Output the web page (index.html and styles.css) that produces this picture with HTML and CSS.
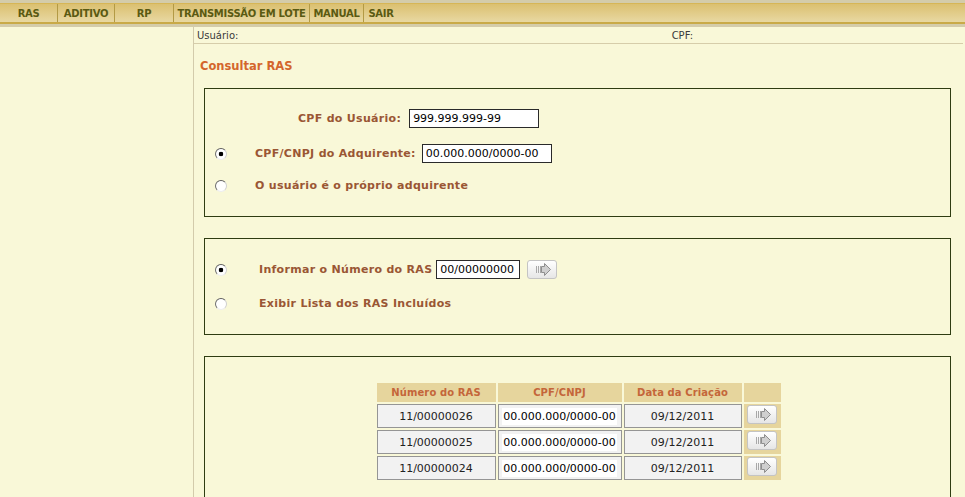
FILE: index.html
```html
<!DOCTYPE html>
<html lang="pt-BR">
<head>
<meta charset="utf-8">
<title>Consultar RAS</title>
<link rel="stylesheet" href="styles.css">
</head>
<body>
<div class="menubar">
  <div class="menu-inner">
    <a class="menu-item w-ras">RAS</a>
    <a class="menu-item w-aditivo">ADITIVO</a>
    <a class="menu-item w-rp">RP</a>
    <a class="menu-item w-trans">TRANSMISSÃO EM LOTE</a>
    <a class="menu-item w-manual">MANUAL</a>
    <a class="menu-item w-sair last">SAIR</a>
  </div>
</div>
<div class="main">
  <aside class="sidebar"></aside>
  <section class="content">
    <div class="userbar">
      <span class="user-label">Usuário:</span>
      <span class="cpf-label">CPF:</span>
    </div>
    <h1 class="title">Consultar RAS</h1>

    <div class="box box-one">
      <div class="row row-user">
        <label class="lbl">CPF do Usuário:</label>
        <input class="field field-wide gap8" type="text" value="999.999.999-99">
      </div>
      <div class="row row-radio1">
        <input class="radio" type="radio" name="adq" checked>
        <label class="lbl">CPF/CNPJ do Adquirente:</label>
        <input class="field field-wide gap5" type="text" value="00.000.000/0000-00">
      </div>
      <div class="row row-radio2">
        <input class="radio" type="radio" name="adq">
        <label class="lbl">O usuário é o próprio adquirente</label>
      </div>
    </div>

    <div class="box box-two">
      <div class="row row-ras1">
        <input class="radio radio-wide" type="radio" name="ras" checked>
        <label class="lbl">Informar o Número do RAS</label>
        <input class="field field-ras gap4" type="text" value="00/00000000">
        <button class="go gap7" type="button" aria-label="Avançar">
          <svg width="30" height="19" viewBox="0 0 30 19"><rect x="9" y="6" width="1" height="7" fill="#a8a8a8"/><rect x="11" y="6" width="1" height="7" fill="#a8a8a8"/><rect x="13" y="6" width="1" height="7" fill="#a8a8a8"/><path d="M14.5 6.5 H17.5 V3.5 L23.5 9.5 L17.5 15.5 V12.5 H14.5 Z" fill="#cfcfcf" stroke="#8e8e8e" stroke-width="1"/></svg>
        </button>
      </div>
      <div class="row row-ras2">
        <input class="radio radio-wide" type="radio" name="ras">
        <label class="lbl">Exibir Lista dos RAS Incluídos</label>
      </div>
    </div>

    <div class="box box-three">
      <table class="list">
        <thead>
          <tr>
            <th class="c1">Número do RAS</th>
            <th class="c2">CPF/CNPJ</th>
            <th class="c3">Data da Criação</th>
            <th class="c4"></th>
          </tr>
        </thead>
        <tbody>
          <tr>
            <td class="cell">11/00000026</td>
            <td class="cell"><span class="doc">00.000.000/0000-00</span></td>
            <td class="cell">09/12/2011</td>
            <td class="act"><button class="go" type="button" aria-label="Abrir"><svg width="30" height="19" viewBox="0 0 30 19"><rect x="9" y="6" width="1" height="7" fill="#a8a8a8"/><rect x="11" y="6" width="1" height="7" fill="#a8a8a8"/><rect x="13" y="6" width="1" height="7" fill="#a8a8a8"/><path d="M14.5 6.5 H17.5 V3.5 L23.5 9.5 L17.5 15.5 V12.5 H14.5 Z" fill="#cfcfcf" stroke="#8e8e8e" stroke-width="1"/></svg></button></td>
          </tr>
          <tr>
            <td class="cell">11/00000025</td>
            <td class="cell"><span class="doc">00.000.000/0000-00</span></td>
            <td class="cell">09/12/2011</td>
            <td class="act"><button class="go" type="button" aria-label="Abrir"><svg width="30" height="19" viewBox="0 0 30 19"><rect x="9" y="6" width="1" height="7" fill="#a8a8a8"/><rect x="11" y="6" width="1" height="7" fill="#a8a8a8"/><rect x="13" y="6" width="1" height="7" fill="#a8a8a8"/><path d="M14.5 6.5 H17.5 V3.5 L23.5 9.5 L17.5 15.5 V12.5 H14.5 Z" fill="#cfcfcf" stroke="#8e8e8e" stroke-width="1"/></svg></button></td>
          </tr>
          <tr>
            <td class="cell">11/00000024</td>
            <td class="cell"><span class="doc">00.000.000/0000-00</span></td>
            <td class="cell">09/12/2011</td>
            <td class="act"><button class="go" type="button" aria-label="Abrir"><svg width="30" height="19" viewBox="0 0 30 19"><rect x="9" y="6" width="1" height="7" fill="#a8a8a8"/><rect x="11" y="6" width="1" height="7" fill="#a8a8a8"/><rect x="13" y="6" width="1" height="7" fill="#a8a8a8"/><path d="M14.5 6.5 H17.5 V3.5 L23.5 9.5 L17.5 15.5 V12.5 H14.5 Z" fill="#cfcfcf" stroke="#8e8e8e" stroke-width="1"/></svg></button></td>
          </tr>
        </tbody>
      </table>
    </div>
  </section>
</div>
</body>
</html>
```
FILE: styles.css
```css
* { box-sizing: border-box; }
html, body { margin: 0; padding: 0; }
body {
  background: #f9f8d8;
  font-family: Verdana, "DejaVu Sans", sans-serif;
  font-size: 11px;
  color: #333;
  min-height: 497px;
  overflow: hidden;
}

/* Menu bar */
.menubar {
  border-top: 3px solid #d4ccaa;
  border-bottom: 3px solid #d4ccaa;
  background: #d4ccaa;
}
.menu-inner {
  display: flex;
  height: 21px;
  border-top: 1px solid #d6b656;
  border-bottom: 2px solid #c9aa48;
  background: linear-gradient(#dbc070, #e8d8a2);
}
.menu-item {
  display: flex;
  align-items: center;
  justify-content: center;
  font-weight: bold;
  font-size: 10px;
  letter-spacing: -0.3px;
  color: #5a5a12;
  border-right: 1px solid #b39a45;
  white-space: nowrap;
}
.menu-item.last { border-right: none; }
.w-ras { width: 58px; }
.w-aditivo { width: 57px; }
.w-rp { width: 59px; }
.w-trans { width: 136px; }
.w-manual { width: 54px; }
.w-sair { width: 34px; }

/* Main area */
.main {
  display: flex;
  min-height: 470px;
}
.sidebar {
  width: 194px;
  flex: none;
  border-right: 1px solid #d3cbab;
}
.content {
  flex: 1;
  padding-right: 2px;
}
.userbar {
  display: flex;
  justify-content: space-between;
  height: 17px;
  align-items: center;
  padding: 0 270px 0 3px;
  border-bottom: 1px solid #d6cdaa;
  font-size: 10px;
  color: #3a3a3a;
}
.title {
  margin: 15px 0 14px 6px;
  font-size: 11.5px;
  line-height: 15px;
  font-weight: bold;
  color: #d4662c;
}

/* Boxes */
.box {
  margin: 0 12px 21px 10px;
  border: 1px solid #2f3d12;
}
.box-one { padding: 20px 0 20px 0; height: 129px; }
.box-two { padding: 21px 0 0 0; height: 97px; }
.box-three { padding: 24px 0 20px 0; margin-bottom: 0; }

.row {
  display: flex;
  align-items: center;
  height: 19px;
  padding-left: 10px;
}
.row-user { padding-left: 93px; }
.row-radio1 { margin-top: 16px; }
.row-radio2 { margin-top: 13px; }
.row-ras2 { margin-top: 15px; }

.lbl {
  font-weight: bold;
  letter-spacing: 0.3px;
  color: #9a5634;
  white-space: nowrap;
}
.radio {
  appearance: none;
  -webkit-appearance: none;
  width: 12px;
  height: 12px;
  margin: 0 28px 0 0;
  border-radius: 50%;
  border: 1px solid;
  border-color: #5e5e5e #cfcfcf #eeeeee #6e6e6e;
  background: #fff;
  flex: none;
}
.radio:checked {
  background: radial-gradient(circle, #000 0, #000 2px, #fff 2.6px);
}
.radio-wide { margin-right: 32px; }

.field {
  height: 19px;
  border: 1px solid #2a2a2a;
  background: #fff;
  font-family: Verdana, "DejaVu Sans", sans-serif;
  font-size: 11px;
  color: #000;
  padding: 0 3px;
}
.field-wide { width: 130px; }
.field-ras { width: 84px; }
.gap8 { margin-left: 8px; }
.gap5 { margin-left: 6px; }
.gap4 { margin-left: 4px; }
.gap7 { margin-left: 7px; }

.go {
  width: 30px;
  height: 19px;
  padding: 0;
  border: 1px solid #c4c4c4;
  border-radius: 3px;
  background: linear-gradient(#ffffff, #e6e6e6);
  display: inline-flex;
  align-items: center;
  justify-content: center;
}
.go svg { display: block; margin: -1px; }

/* Table */
.list {
  margin: 0 auto;
  border-collapse: separate;
  border-spacing: 2px;
  position: relative;
  left: 1px;
  table-layout: fixed;
}
.list th {
  height: 19px;
  padding: 0;
  background: #e6d59d;
  color: #c4663a;
  font-weight: bold;
  font-size: 10px;
  letter-spacing: 0.1px;
  text-align: center;
}
.c1 { width: 119px; }
.c2 { width: 124px; }
.c3 { width: 118px; }
.c4 { width: 37px; }
.list .cell {
  height: 24px;
  padding: 0;
  border: 1px solid #959595;
  background: #f2f2f2;
  color: #222;
  font-size: 11px;
  text-align: center;
}
.doc {
  display: inline-block;
  background: #fff;
  padding: 2px 1px;
  color: #000;
  font-size: 11px;
}
.list .act {
  background: #e6d59d;
  padding: 0 0 0 3px;
  text-align: left;
}
```
